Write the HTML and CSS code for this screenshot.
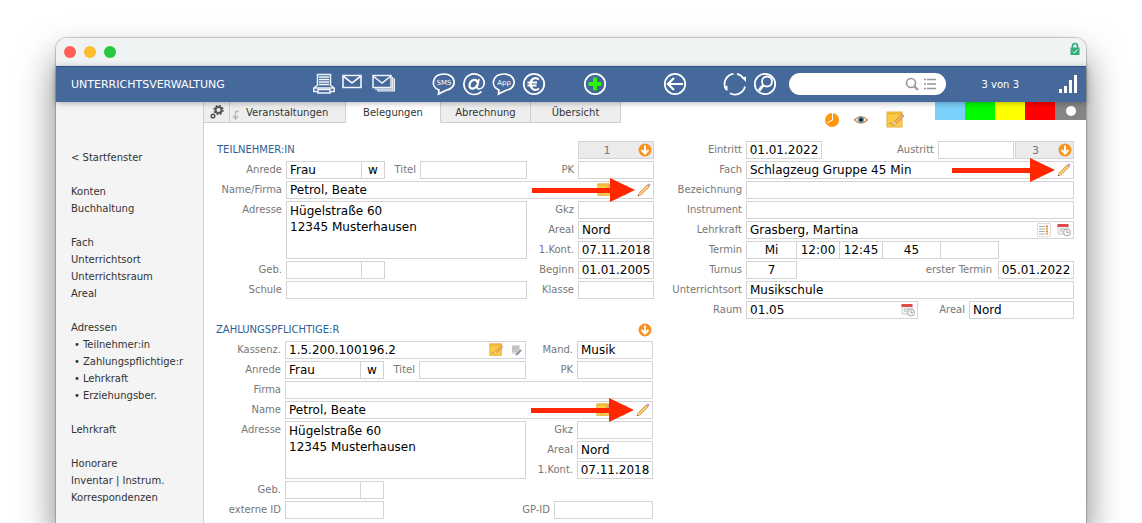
FILE: index.html
```html
<!DOCTYPE html>
<html lang="de">
<head>
    <meta charset="UTF-8">
    <meta name="viewport" content="width=device-width, initial-scale=1.0">
    <title>Unterrichtsverwaltung</title>
    <link rel="stylesheet" href="styles.css">
</head>
<body>
    <svg class="defs" aria-hidden="true">
        <symbol id="note" viewBox="0 0 18 18">
            <rect x="1" y="1" width="15" height="15" fill="#fccb45" stroke="#e3b040"/>
            <path d="M1 2.500h15" stroke="#e9b030" stroke-width="1.500"/>
            <path d="M3 13q2-3 3 0t3-1" fill="none" stroke="#c0902d"/>
            <path d="M7 14l1-3 8-8 2 2-8 8z" fill="#f6b25b" stroke="#b7793a" stroke-width=".7"/>
            <path d="M7 14l1-3 2 2z" fill="#eee"/>
            <path d="M15 4l1-1 2 2-1 1z" fill="#c99ac3"/>
        </symbol>
        <symbol id="pencil" viewBox="0 0 14 14">
            <path d="M1 13l1-3 8-8 2 2-8 8z" fill="#f8b850" stroke="#c98a40" stroke-width=".6"/>
            <path d="M3 11l8-8" stroke="#ffe0a0"/>
            <path d="M1 13l1-3 2 2z" fill="#e9d5b5"/>
            <path d="M1 13l.5-1.500 1 1z" fill="#333"/>
            <path d="M10 2l1-1q1-1 2 0t0 2l-1 1z" fill="#c79acb"/>
        </symbol>
        <symbol id="down" viewBox="0 0 14 14">
            <circle cx="7" cy="7" r="6.500" fill="#f7931e"/>
            <path d="M7 2.500v8M3.500 7L7 10.500l3.500-3.500" fill="none" stroke="#fff" stroke-width="2"/>
        </symbol>
        <symbol id="calendar" viewBox="0 0 14 14">
            <path d="M1 2h10v9H1z" fill="#f3f3f3" stroke="#ccc"/>
            <path d="M.5 1h11v3H.5z" fill="#dd4b4b"/>
            <path d="M3 6h6M3 8h3" stroke="#bbb"/>
            <circle cx="10" cy="9.500" r="3.500" fill="#f5f5f5" stroke="#aaa"/>
            <path d="M10 7.500v2h2" fill="none" stroke="#888" stroke-width=".8"/>
        </symbol>
        <symbol id="list" viewBox="0 0 14 14">
            <path d="M.5.5h13v13H.5z" fill="#fff" stroke="#ddd"/>
            <path d="M2 3.500h6M2 6h6M2 8.500h6M2 11h6" stroke="#aaa"/>
            <path d="M9 3.500h2M9 8.500h2" stroke="#e08a50" stroke-width="2"/>
            <path d="M9 6h2M9 11h2" stroke="#f2c230" stroke-width="2"/>
        </symbol>
        <symbol id="doc" viewBox="0 0 14 14">
            <path d="M3 2h8v9H3z" fill="#ddd"/>
            <path d="M3 4h7M3 6h7M3 8h5" stroke="#aaa"/>
            <path d="M7 12l5-5" stroke="#7f97ad" stroke-width="2"/>
        </symbol>
        <symbol id="arrow" viewBox="0 0 103 26">
            <path d="M0 11h78V1l25 12-25 12V16H0z" fill="#ff2600"/>
        </symbol>
    </svg>

    <div class="window">
        <div class="titlebar">
            <span class="dot red"></span>
            <span class="dot amber"></span>
            <span class="dot green"></span>
            <svg class="lock" viewBox="0 0 10 14">
                <path d="M2.500 6V4a2.500 2.500 0 0 1 5 0v2" fill="none" stroke="#35ad78" stroke-width="1.600"/>
                <path d="M.5 5.500h9V13h-9z" fill="#35ad78"/>
                <path d="M3 9.500L4.500 11l3-3.500" fill="none" stroke="#fff"/>
            </svg>
        </div>

        <header class="toolbar">
            <h1>UNTERRICHTSVERWALTUNG</h1>
            <div class="tools">
                <button class="tool" aria-label="Drucken">
                    <svg viewBox="0 0 24 24"><g fill="none" stroke="#eef3fa" stroke-width="1.500"><path d="M5.500 14V2.500h13V14M7 5h10M7 7.500h10M7 10h10M7 12.500h10"/><path d="M5 13.500l-3.200 2.500v3.500h4M19 13.500l3.200 2.500v3.500h-4M2 16h20"/><path d="M6 17.500h12v3.500H6z"/></g></svg>
                </button>
                <button class="tool" aria-label="Brief">
                    <svg viewBox="0 0 24 24"><path d="M3 3.500h18v12H3zM3 4l9 7 9-7" fill="none" stroke="#eef3fa" stroke-width="1.600"/></svg>
                </button>
                <button class="tool wide" aria-label="Serienbrief">
                    <svg viewBox="0 0 24 24"><g fill="none" stroke="#eef3fa" stroke-width="1.500"><path d="M1 3.500h18v12H1zM1 4l9 7 9-7"/><path d="M3 17.200h17.700V5M5 18.900h17.400V6.500" stroke-width="1.300"/></g></svg>
                </button>
            </div>
            <div class="tools contact">
                <button class="tool" aria-label="SMS">
                    <svg viewBox="0 0 24 24"><path d="M7 18C-2 14.500 0 2 12 2s14.500 14 1.500 16.500L6.500 22z" fill="none" stroke="#fff" stroke-width="1.700"/><text x="12" y="13" class="glyph-text">SMS</text></svg>
                </button>
                <button class="tool" aria-label="E-Mail">
                    <svg viewBox="0 0 24 24"><g fill="none" stroke="#fff"><path d="M19.500 19.500A10.300 10.300 0 1 1 22 9c1 5-2 8-5 8-2 0-2-1-1.500-3L17 7" stroke-width="1.700"/><path d="M15.500 11c0-5-7-4-8 2-.5 5 6 5 8-1" stroke-width="2.200"/></g></svg>
                </button>
                <button class="tool" aria-label="App">
                    <svg viewBox="0 0 24 24"><path d="M7 18C-2 14.500 0 2 12 2s14.500 14 1.500 16.500L6.500 22z" fill="none" stroke="#fff" stroke-width="1.700"/><text x="12" y="13" class="glyph-text">App</text></svg>
                </button>
                <button class="tool" aria-label="Euro">
                    <svg viewBox="0 0 24 24"><circle cx="12" cy="12" r="10.200" fill="none" stroke="#fff" stroke-width="1.800"/><path d="M17 7.500C12 4 8.500 8 8.500 12s3.500 8 8.500 4.500M5.500 10.500H15M5.500 13.500h9" fill="none" stroke="#fff" stroke-width="2"/></svg>
                </button>
            </div>
            <button class="tool add" aria-label="Neu">
                <svg viewBox="0 0 24 24"><circle cx="12" cy="12" r="10.200" fill="none" stroke="#fff" stroke-width="1.800"/><path d="M12 6v13M6 12.500h13" stroke="#2b5a43" stroke-width="4"/><path d="M12 5.500v13M5.500 12h13" stroke="#2bf50b" stroke-width="4"/></svg>
            </button>
            <button class="tool back" aria-label="Zurück">
                <svg viewBox="0 0 24 24"><circle cx="12" cy="12" r="10.200" fill="none" stroke="#fff" stroke-width="1.800"/><path d="M20 12H5M11 6l-6 6 6 6" fill="none" stroke="#fff" stroke-width="2.200"/></svg>
            </button>
            <div class="tools find">
                <button class="tool" aria-label="Aktualisieren">
                    <svg viewBox="0 0 24 24"><path d="M10.500 1.800A10.300 10.300 0 0 0 3.500 18M7 21.200A10.300 10.300 0 0 0 22 14.500M20.500 6.500A10.300 10.300 0 0 0 14 1.900" fill="none" stroke="#fff" stroke-width="1.800"/><path d="M1 15.500l3.500-2v5.500zM19 6l4-1.500v5.500z" fill="#fff"/></svg>
                </button>
                <button class="tool" aria-label="Suchen">
                    <svg viewBox="0 0 24 24"><g fill="none" stroke="#fff" stroke-width="1.800"><circle cx="12" cy="12" r="10.200"/><circle cx="14" cy="9.500" r="5"/><path d="M10.500 13L6 18.500" stroke-width="2.800"/></g></svg>
                </button>
            </div>
            <div class="search">
                <input type="text" aria-label="Suche">
                <svg viewBox="0 0 32 14"><g fill="none" stroke="#969696" stroke-width="1.600"><circle cx="6" cy="6" r="4.500"/><path d="M9 9l4 4" stroke-width="2"/><path d="M22 2.500h9M22 7h9M22 11.500h9M19 2.500h2M19 7h2M19 11.500h2"/></g></svg>
            </div>
            <span class="count">3 von 3</span>
            <svg class="bars" viewBox="0 0 18 18"><path d="M0 14h3v4H0zM5 11h3v7H5zM10 5h3v13h-3zM15 0h3v18h-3z" fill="#fff"/></svg>
        </header>

        <div class="content">
            <nav class="sidebar">
                <ul>
                    <li><a href="#">&lt; Startfenster</a></li>
                </ul>
                <ul>
                    <li><a href="#">Konten</a></li>
                    <li><a href="#">Buchhaltung</a></li>
                </ul>
                <ul>
                    <li><a href="#">Fach</a></li>
                    <li><a href="#">Unterrichtsort</a></li>
                    <li><a href="#">Unterrichtsraum</a></li>
                    <li><a href="#">Areal</a></li>
                </ul>
                <ul>
                    <li><a href="#">Adressen</a></li>
                    <li class="sub"><a href="#">Teilnehmer:in</a></li>
                    <li class="sub"><a href="#">Zahlungspflichtige:r</a></li>
                    <li class="sub"><a href="#">Lehrkraft</a></li>
                    <li class="sub"><a href="#">Erziehungsber.</a></li>
                </ul>
                <ul>
                    <li><a href="#">Lehrkraft</a></li>
                </ul>
                <ul>
                    <li><a href="#">Honorare</a></li>
                    <li><a href="#">Inventar | Instrum.</a></li>
                    <li><a href="#">Korrespondenzen</a></li>
                </ul>
            </nav>

            <main>
                <div class="topbar">
                    <div class="tabs">
                        <button class="tab gear" aria-label="Einstellungen">
                            <svg viewBox="0 0 14 14"><g fill="none" stroke="#555"><circle cx="8.500" cy="5" r="3" stroke-width="2"/><circle cx="8.500" cy="5" r="4.500" stroke-width="1.500" stroke-dasharray="1.800 1.730"/><circle cx="3" cy="11" r="1.800" stroke-width="1.500"/></g></svg>
                        </button>
                        <button class="tab first">
                            <svg viewBox="0 0 8 10"><path d="M7 1.500H3.500V8M1 6l2.500 3L6 6" fill="none" stroke="#bbb" stroke-width="1.500"/></svg>
                            Veranstaltungen
                        </button>
                        <button class="tab active">Belegungen</button>
                        <button class="tab">Abrechnung</button>
                        <button class="tab">Übersicht</button>
                    </div>
                    <div class="marks">
                        <button class="icon" aria-label="Zeit"><svg viewBox="0 0 14 14"><circle cx="7" cy="7" r="7" fill="#ff970f"/><path d="M7.500 0v7L2 10" fill="none" stroke="#fff"/></svg></button>
                        <button class="icon" aria-label="Ansicht"><svg viewBox="0 0 14 14"><path d="M.5 7Q7 0 13.500 7 7 13 .5 7z" fill="#f5eee4" stroke="#c58c52" stroke-width="1.200"/><circle cx="7" cy="6.700" r="3" fill="#5683a2"/><circle cx="7" cy="6.700" r="1.500" fill="#111"/></svg></button>
                        <button class="icon large" aria-label="Notiz"><svg><use href="#note"/></svg></button>
                    </div>
                    <div class="swatches">
                        <button class="swatch blue" aria-label="Blau"></button>
                        <button class="swatch lime" aria-label="Grün"></button>
                        <button class="swatch yellow" aria-label="Gelb"></button>
                        <button class="swatch crimson" aria-label="Rot"></button>
                        <button class="swatch gray" aria-label="Keine"><span></span></button>
                    </div>
                </div>

                <div class="forms">
                    <div class="left">
                        <section class="form">
                            <div class="row">
                                <h2>TEILNEHMER:IN</h2>
                                <div class="field total">
                                    <input type="text" value="1" aria-label="Anzahl">
                                    <button class="icon" aria-label="Öffnen"><svg><use href="#down"/></svg></button>
                                </div>
                            </div>
                            <div class="row">
                                <label class="main-label" for="t-anrede">Anrede</label>
                                <input class="field date" type="text" id="t-anrede" value="Frau">
                                <input class="field tiny joined center" type="text" value="w" aria-label="Geschlecht">
                                <label class="title-label" for="t-titel">Titel</label>
                                <input class="field grow" type="text" id="t-titel">
                                <label class="side-label" for="t-pk">PK</label>
                                <input class="field date" type="text" id="t-pk">
                            </div>
                            <div class="row">
                                <label class="main-label" for="t-name">Name/Firma</label>
                                <div class="field grow">
                                    <input type="text" id="t-name" value="Petrol, Beate">
                                    <button class="icon" aria-label="Notiz"><svg><use href="#note"/></svg></button>
                                    <button class="icon" aria-label="Dokument"><svg><use href="#doc"/></svg></button>
                                    <button class="icon" aria-label="Bearbeiten"><svg><use href="#pencil"/></svg></button>
                                    <svg class="pointer"><use href="#arrow"/></svg>
                                </div>
                            </div>
                            <div class="row">
                                <label class="main-label" for="t-adresse">Adresse</label>
                                <textarea class="field grow" id="t-adresse">Hügelstraße 60
12345 Musterhausen</textarea>
                                <div class="side">
                                    <div class="row">
                                        <label class="side-label" for="t-gkz">Gkz</label>
                                        <input class="field date" type="text" id="t-gkz">
                                    </div>
                                    <div class="row">
                                        <label class="side-label" for="t-areal">Areal</label>
                                        <input class="field date" type="text" id="t-areal" value="Nord">
                                    </div>
                                    <div class="row">
                                        <label class="side-label" for="t-kont">1.Kont.</label>
                                        <input class="field date center" type="text" id="t-kont" value="07.11.2018">
                                    </div>
                                </div>
                            </div>
                            <div class="row">
                                <label class="main-label" for="t-geb">Geb.</label>
                                <input class="field date" type="text" id="t-geb">
                                <input class="field tiny joined" type="text" aria-label="Alter">
                                <label class="side-label push" for="t-beginn">Beginn</label>
                                <input class="field date center" type="text" id="t-beginn" value="01.01.2005">
                            </div>
                            <div class="row">
                                <label class="main-label" for="t-schule">Schule</label>
                                <input class="field grow" type="text" id="t-schule">
                                <label class="side-label" for="t-klasse">Klasse</label>
                                <input class="field date" type="text" id="t-klasse">
                            </div>
                        </section>

                        <section class="form payer">
                            <div class="row">
                                <h2>ZAHLUNGSPFLICHTIGE:R</h2>
                                <button class="icon open" aria-label="Öffnen"><svg><use href="#down"/></svg></button>
                            </div>
                            <div class="row">
                                <label class="main-label" for="z-kasse">Kassenz.</label>
                                <div class="field grow">
                                    <input type="text" id="z-kasse" value="1.5.200.100196.2">
                                    <button class="icon" aria-label="Notiz"><svg><use href="#note"/></svg></button>
                                    <button class="icon" aria-label="Dokument"><svg><use href="#doc"/></svg></button>
                                </div>
                                <label class="side-label" for="z-mand">Mand.</label>
                                <input class="field date" type="text" id="z-mand" value="Musik">
                            </div>
                            <div class="row">
                                <label class="main-label" for="z-anrede">Anrede</label>
                                <input class="field date" type="text" id="z-anrede" value="Frau">
                                <input class="field tiny joined center" type="text" value="w" aria-label="Geschlecht">
                                <label class="title-label" for="z-titel">Titel</label>
                                <input class="field grow" type="text" id="z-titel">
                                <label class="side-label" for="z-pk">PK</label>
                                <input class="field date" type="text" id="z-pk">
                            </div>
                            <div class="row">
                                <label class="main-label" for="z-firma">Firma</label>
                                <input class="field grow" type="text" id="z-firma">
                            </div>
                            <div class="row">
                                <label class="main-label" for="z-name">Name</label>
                                <div class="field grow">
                                    <input type="text" id="z-name" value="Petrol, Beate">
                                    <button class="icon" aria-label="Notiz"><svg><use href="#note"/></svg></button>
                                    <button class="icon" aria-label="Dokument"><svg><use href="#doc"/></svg></button>
                                    <button class="icon" aria-label="Bearbeiten"><svg><use href="#pencil"/></svg></button>
                                    <svg class="pointer"><use href="#arrow"/></svg>
                                </div>
                            </div>
                            <div class="row">
                                <label class="main-label" for="z-adresse">Adresse</label>
                                <textarea class="field grow" id="z-adresse">Hügelstraße 60
12345 Musterhausen</textarea>
                                <div class="side">
                                    <div class="row">
                                        <label class="side-label" for="z-gkz">Gkz</label>
                                        <input class="field date" type="text" id="z-gkz">
                                    </div>
                                    <div class="row">
                                        <label class="side-label" for="z-areal">Areal</label>
                                        <input class="field date" type="text" id="z-areal" value="Nord">
                                    </div>
                                    <div class="row">
                                        <label class="side-label" for="z-kont">1.Kont.</label>
                                        <input class="field date center" type="text" id="z-kont" value="07.11.2018">
                                    </div>
                                </div>
                            </div>
                            <div class="row">
                                <label class="main-label" for="z-geb">Geb.</label>
                                <input class="field date" type="text" id="z-geb">
                                <input class="field tiny joined" type="text" aria-label="Alter">
                            </div>
                            <div class="row">
                                <label class="main-label" for="z-extern">externe ID</label>
                                <input class="field id" type="text" id="z-extern">
                                <label class="side-label push" for="z-gp">GP-ID</label>
                                <input class="field id" type="text" id="z-gp">
                            </div>
                        </section>
                    </div>

                    <section class="form lesson">
                        <div class="row">
                            <label class="main-label" for="eintritt">Eintritt</label>
                            <input class="field date center" type="text" id="eintritt" value="01.01.2022">
                            <label class="side-label push" for="austritt">Austritt</label>
                            <input class="field date" type="text" id="austritt">
                            <div class="field total small">
                                <input type="text" value="3" aria-label="Anzahl">
                                <button class="icon" aria-label="Öffnen"><svg><use href="#down"/></svg></button>
                            </div>
                        </div>
                        <div class="row">
                            <label class="main-label" for="fach">Fach</label>
                            <div class="field grow">
                                <input type="text" id="fach" value="Schlagzeug Gruppe 45 Min">
                                <button class="icon" aria-label="Bearbeiten"><svg><use href="#pencil"/></svg></button>
                                <svg class="pointer"><use href="#arrow"/></svg>
                            </div>
                        </div>
                        <div class="row">
                            <label class="main-label" for="bezeichnung">Bezeichnung</label>
                            <input class="field grow" type="text" id="bezeichnung">
                        </div>
                        <div class="row">
                            <label class="main-label" for="instrument">Instrument</label>
                            <input class="field grow" type="text" id="instrument">
                        </div>
                        <div class="row">
                            <label class="main-label" for="lehrkraft">Lehrkraft</label>
                            <div class="field grow">
                                <input type="text" id="lehrkraft" value="Grasberg, Martina">
                                <button class="icon" aria-label="Liste"><svg><use href="#list"/></svg></button>
                                <button class="icon" aria-label="Kalender"><svg><use href="#calendar"/></svg></button>
                            </div>
                        </div>
                        <div class="row">
                            <label class="main-label" for="termin">Termin</label>
                            <input class="field day center" type="text" id="termin" value="Mi">
                            <input class="field time joined center" type="text" value="12:00" aria-label="Von">
                            <input class="field time joined center" type="text" value="12:45" aria-label="Bis">
                            <input class="field minutes joined center" type="text" value="45" aria-label="Minuten">
                            <input class="field minutes joined" type="text" aria-label="Zusatz">
                        </div>
                        <div class="row">
                            <label class="main-label" for="turnus">Turnus</label>
                            <input class="field day center" type="text" id="turnus" value="7">
                            <label class="far-label push" for="erster">erster Termin</label>
                            <input class="field date center" type="text" id="erster" value="05.01.2022">
                        </div>
                        <div class="row">
                            <label class="main-label" for="ort">Unterrichtsort</label>
                            <input class="field grow" type="text" id="ort" value="Musikschule">
                        </div>
                        <div class="row">
                            <label class="main-label" for="raum">Raum</label>
                            <div class="field grow">
                                <input type="text" id="raum" value="01.05">
                                <button class="icon" aria-label="Kalender"><svg><use href="#calendar"/></svg></button>
                            </div>
                            <label class="side-label" for="areal">Areal</label>
                            <input class="field area" type="text" id="areal" value="Nord">
                        </div>
                    </section>
                </div>
            </main>
        </div>
    </div>
</body>
</html>
```
FILE: styles.css
```css
* {
    box-sizing: border-box;
}

body {
    display: flex;
    flex-direction: column;
    margin: 0;
    height: 100vh;
    padding: 38px 56px 0;
    overflow: hidden;
    background-color: #fff;
    font-family: "DejaVu Sans", Verdana, sans-serif;
    font-size: 10px;
    color: #333;
}

button, input, textarea {
    margin: 0;
    padding: 0;
    border: none;
    background: none;
    font-family: inherit;
    font-size: inherit;
    color: inherit;
}

button {
    cursor: pointer;
}

svg {
    display: block;
}

.defs {
    position: absolute;
    width: 0;
    height: 0;
}

.window {
    display: flex;
    flex: 1;
    flex-direction: column;
    border-radius: 11px 11px 0 0;
    background-color: #fff;
    box-shadow: 0 0 1px 1px rgba(0,0,0,0.2), 0 20px 36px rgba(0,0,0,0.5);
}

/* title bar */
.titlebar {
    display: flex;
    align-items: center;
    gap: 8px;
    height: 28px;
    padding: 0 6px 0 8px;
    border-radius: 11px 11px 0 0;
    background-color: #eff3f4;
}

.dot {
    width: 12px;
    height: 12px;
    border-radius: 50%;
}

.red {
    background-color: #ff5f57;
}

.amber {
    background-color: #febc2e;
}

.green {
    background-color: #28c840;
}

.lock {
    width: 10px;
    height: 14px;
    margin-left: auto;
    margin-bottom: 6px;
}

/* toolbar */
.toolbar {
    position: relative;
    display: flex;
    align-items: center;
    height: 36px;
    padding: 0 9px 1px 15px;
    border-top: 1px solid #2b5283;
    background-color: #46699b;
    box-shadow: 0 1px 6px rgba(0,0,0,0.3);
    color: #fff;
}

h1 {
    flex: 0 0 241px;
    margin: 0;
    font-size: 11px;
    font-weight: normal;
}

.tools {
    display: flex;
    gap: 6px;
}

.tools:first-of-type {
    gap: 4px;
}

.tool, .tool svg {
    width: 24px;
    height: 24px;
}

.wide {
    margin-left: 4px;
}

.contact {
    margin-left: 36px;
}

.add {
    margin-left: 37px;
}

.back {
    margin-left: 56px;
}

.find {
    margin-left: 36px;
}

.glyph-text {
    font-size: 7px;
    text-anchor: middle;
    fill: #fff;
}

.search {
    display: flex;
    flex: 1;
    align-items: center;
    min-width: 0;
    height: 22px;
    margin-left: 12px;
    padding: 0 9px 0 12px;
    border-radius: 11px;
    background-color: #fff;
}

.search input {
    flex: 1;
    min-width: 0;
    color: #333;
}

.search svg {
    flex: none;
    width: 32px;
    height: 14px;
}

.count {
    margin: 0 40px 0 36px;
    white-space: nowrap;
}

.bars {
    flex: none;
    width: 18px;
    height: 18px;
}

/* sidebar */
.content {
    display: flex;
    flex: 1;
}

.sidebar {
    flex: 0 0 148px;
    padding: 47px 0 0 15px;
    border-right: 1px solid #d0d0d0;
    background-color: #f4f4f4;
    line-height: 17px;
}

.sidebar ul {
    margin: 0 0 17px;
    padding: 0;
    list-style: none;
}

.sidebar ul:last-child {
    margin-bottom: 0;
}

.sidebar a {
    color: #333;
    text-decoration: none;
}

.sub::before {
    content: "•";
    margin: 0 3px;
}

/* tabs */
main {
    flex: 1;
    min-width: 0;
}

.topbar {
    display: flex;
    height: 28px;
}

.tabs {
    display: flex;
    height: 21px;
}

.tab {
    width: 90px;
    border-right: 1px solid #d0d0d0;
    border-bottom: 1px solid #d0d0d0;
    background-color: #eee;
}

.gear {
    width: 26px;
    padding-left: 6px;
}

.gear svg {
    width: 14px;
    height: 14px;
}

.first {
    display: flex;
    align-items: center;
    gap: 6px;
    width: 116px;
    padding-left: 2px;
}

.first svg {
    width: 8px;
    height: 10px;
    margin-top: 6px;
}

.active {
    width: 95px;
    border-bottom-color: #fff;
    background-color: #fff;
}

.marks {
    display: flex;
    align-items: center;
    gap: 15px;
    margin: 8px 31px 0 auto;
}

.swatches {
    display: flex;
    height: 18px;
}

.swatch {
    width: 30px;
}

.blue {
    background-color: #7ad1fb;
}

.lime {
    background-color: #00fa00;
}

.yellow {
    background-color: #ffff00;
}

.crimson {
    background-color: #ff0000;
}

.gray {
    width: 31px;
    background-color: #858585;
}

.gray span {
    display: block;
    width: 10px;
    height: 10px;
    margin: 0 auto;
    border-radius: 50%;
    background-color: #fff;
}

/* forms */
.forms {
    display: grid;
    grid-template-columns: minmax(0, 438fr) minmax(0, 402fr);
    gap: 18px;
    padding: 11px 12px 0;
}

.form {
    display: flex;
    flex-direction: column;
    gap: 2px;
}

.payer {
    margin: 22px 1px 0 -1px;
}

.row {
    display: flex;
}

h2 {
    margin: 0 auto 0 1px;
    font-size: 10px;
    font-weight: normal;
    line-height: 18px;
    color: #2c5f96;
}

label {
    flex: none;
    padding-right: 4px;
    line-height: 18px;
    text-align: right;
    white-space: nowrap;
    color: #777;
}

.main-label {
    width: 70px;
}

.lesson .main-label {
    width: 74px;
}

.title-label {
    width: 35px;
}

.side-label {
    width: 51px;
}

.far-label {
    padding-right: 6px;
}

.push {
    margin-left: auto;
}

.field {
    height: 18px;
    padding: 0 3px;
    border: 1px solid #d4d4d4;
    background-color: #fff;
    font-size: 12px;
    color: #000;
}

div.field {
    position: relative;
    display: flex;
    align-items: center;
    gap: 6px;
    padding-right: 2px;
}

div.field input {
    flex: 1;
    min-width: 0;
    height: 16px;
}

.grow {
    flex: 1;
    min-width: 0;
}

.center {
    padding: 0;
    text-align: center;
}

.joined {
    margin-left: -1px;
}

.date {
    width: 76px;
}

.tiny {
    width: 24px;
}

.id {
    width: 99px;
}

.day {
    width: 51px;
}

.time {
    width: 44px;
}

.minutes {
    width: 59px;
}

.area {
    width: 105px;
}

textarea.field {
    height: 58px;
    padding-top: 1px;
    line-height: 16px;
    resize: none;
}

.side {
    display: flex;
    flex-direction: column;
    gap: 2px;
}

div.total {
    width: 76px;
    padding-right: 1px;
    background-color: #ebebeb;
}

div.total input {
    font-size: 11px;
    text-align: center;
    color: #777;
}

div.small {
    width: 59px;
    margin-left: 1px;
}

.icon, .icon svg {
    flex: none;
    width: 14px;
    height: 14px;
}

.large, .large svg {
    width: 18px;
    height: 18px;
}

.large {
    margin-left: 3px;
}

.open {
    margin: 2px 1px 0 0;
}

/* red arrows lie over the icons of the field */
.pointer {
    position: absolute;
    top: -5px;
    right: 18px;
    width: 103px;
    height: 26px;
}
```
